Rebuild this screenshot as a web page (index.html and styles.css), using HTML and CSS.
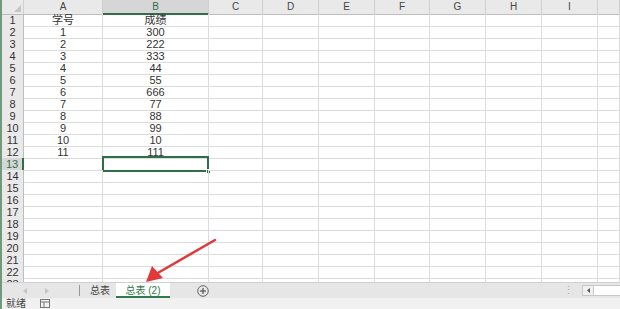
FILE: index.html
```html
<!DOCTYPE html>
<html lang="zh-CN">
<head>
	<meta charset="UTF-8">
	<title>总表 (2)</title>
	<link rel="stylesheet" href="styles.css">
</head>
<body>
	<div id="app">
		<div id="sheet">
			<div class="row head">
				<div class="corner"><span class="tri"></span></div>
				<div class="colhead">A</div>
				<div class="colhead sel">B</div>
				<div class="colhead">C</div>
				<div class="colhead">D</div>
				<div class="colhead">E</div>
				<div class="colhead">F</div>
				<div class="colhead">G</div>
				<div class="colhead">H</div>
				<div class="colhead">I</div>
				<div class="colhead"></div>
			</div>
			<div id="rows"></div>
		</div>
		<div id="tabbar">
			<div id="nav">
				<svg width="4" height="6" viewBox="0 0 4 6"><polygon points="4,0 0,3 4,6" fill="#c4c4c4"/></svg>
				<svg width="4" height="6" viewBox="0 0 4 6"><polygon points="0,0 4,3 0,6" fill="#c4c4c4"/></svg>
			</div>
			<div class="tab">总表</div>
			<div class="tab active">总表 (2)</div>
			<div id="addsheet">
				<svg width="12" height="12" viewBox="0 0 12 12">
					<circle cx="6" cy="6" r="5.3" fill="none" stroke="#666" stroke-width="1"/>
					<line x1="3" y1="6" x2="9" y2="6" stroke="#555" stroke-width="1.2"/>
					<line x1="6" y1="3" x2="6" y2="9" stroke="#555" stroke-width="1.2"/>
				</svg>
			</div>
			<div id="spacer"></div>
			<div id="dots">&#8942;</div>
			<div id="hscroll">
				<div id="hleft"><svg width="3" height="5" viewBox="0 0 3 5"><polygon points="3,0 0,2.5 3,5" fill="#555"/></svg></div>
			</div>
		</div>
		<div id="status">
			<span>就绪</span>
			<svg id="macro" width="10" height="9" viewBox="0 0 10 9">
				<rect x="0.5" y="0.5" width="9" height="8" fill="none" stroke="#777"/>
				<line x1="0.5" y1="3" x2="9.5" y2="3" stroke="#777"/>
				<line x1="4" y1="3" x2="4" y2="8.5" stroke="#777"/>
			</svg>
		</div>
		<svg id="arrow" width="620" height="309" viewBox="0 0 620 309">
			<line x1="215" y1="240" x2="156" y2="274" stroke="#e2383a" stroke-width="2.5" stroke-linecap="round"/>
			<polygon points="146,282 152,266 163,278" fill="#e2383a"/>
		</svg>
	</div>
	<script>
		var colA = ["学号","1","2","3","4","5","6","7","8","9","10","11"];
		var colB = ["成绩","300","222","333","44","55","666","77","88","99","10","111"];
		var rows = document.getElementById('rows');
		for(var i = 1; i <= 23; i++){
			var row = document.createElement('div');
			row.className = "row";
			var html = "<div class='rowhead" + (i == 13 ? " sel" : "") + "'>" + i + "</div>";
			html += "<div class='cell'>" + (colA[i-1] || "") + "</div>";
			html += "<div class='cell'>" + (colB[i-1] || "") + (i == 13 ? "<span class='selbox'><span class='handle'></span></span>" : "") + "</div>";
			for(var c = 0; c < 8; c++){
				html += "<div class='cell'></div>";
			}
			row.innerHTML = html;
			rows.appendChild(row);
		}
	</script>
</body>
</html>
```

FILE: styles.css
```css
*{
	margin: 0;
	padding: 0;
	box-sizing: border-box;
}
body{
	font-family: "Liberation Sans", "Noto Sans CJK SC", sans-serif;
	background-color: #fff;
	overflow: hidden;
}
#app{
	position: relative;
	width: 620px;
	height: 309px;
	border-left: 2px solid #6f9a7d;
	overflow: hidden;
}
#sheet{
	height: 282px;
	overflow: hidden;
}
.row{
	display: grid;
	grid-template-columns: 22px 79px 106px 54px 56px 56px 55px 56px 56px 56px 22px;
	height: 12px;
}
.row.head{
	height: 14px;
}
.corner, .colhead{
	position: relative;
	background-color: #e9e9e9;
	border-right: 1px solid #cfcfcf;
	border-bottom: 1px solid #bdbdbd;
	font-size: 10px;
	line-height: 13px;
	text-align: center;
	color: #444;
}
.colhead.sel{
	background-color: #d6d6d6;
	border-bottom: 2px solid #2e6e48;
	color: #2e6e48;
}
.tri{
	position: absolute;
	right: 2px;
	bottom: 2px;
	width: 0;
	height: 0;
	border-left: 7px solid transparent;
	border-bottom: 7px solid #c4c4c4;
}
.rowhead{
	background-color: #e9e9e9;
	border-right: 1px solid #bdbdbd;
	border-bottom: 1px solid #d2d2d2;
	font-size: 11px;
	line-height: 12px;
	text-align: center;
	color: #333;
}
.rowhead.sel{
	background-color: #d6d6d6;
	border-right: 2px solid #2e6e48;
	color: #2e6e48;
}
.cell{
	position: relative;
	border-right: 1px solid #dcdcdc;
	border-bottom: 1px solid #dcdcdc;
	font-size: 11px;
	line-height: 12px;
	text-align: center;
	color: #333;
}
.selbox{
	position: absolute;
	left: -1px;
	top: -2px;
	right: -1px;
	bottom: -2px;
	border: 2px solid #2e6e48;
}
.handle{
	position: absolute;
	right: -4px;
	bottom: -4px;
	width: 5px;
	height: 5px;
	background-color: #2e6e48;
	border: 1px solid #fff;
}
#tabbar{
	display: flex;
	align-items: stretch;
	height: 16px;
	background-color: #e6e6e6;
	border-top: 1px solid #d0d0d0;
	font-size: 10px;
	color: #444;
}
#nav{
	display: flex;
	align-items: center;
	width: 78px;
	padding-left: 21px;
	gap: 18px;
	border-right: 1px solid #999;
	margin: 2px 0;
}
.tab{
	padding: 0 6px;
	line-height: 15px;
	margin-left: 4px;
}
.tab.active{
	margin-left: 0;
	background-color: #fff;
	color: #2e7a4a;
	border-bottom: 2px solid #2e7a4a;
	padding: 0;
	width: 54px;
	text-align: center;
}
#addsheet{
	display: flex;
	align-items: center;
	margin-left: 27px;
}
#spacer{
	flex: 1;
}
#dots{
	color: #aaa;
	font-size: 11px;
	line-height: 15px;
	margin-right: 8px;
}
#hscroll{
	width: 38px;
	margin: 2px 0;
	background-color: #fff;
	border: 1px solid #c8c8c8;
	border-right: none;
}
#hleft{
	display: flex;
	align-items: center;
	justify-content: center;
	width: 11px;
	height: 100%;
	border-right: 1px solid #c8c8c8;
	background-color: #f0f0f0;
}
#status{
	display: flex;
	align-items: center;
	gap: 14px;
	height: 11px;
	padding-left: 4px;
	background-color: #f1f1f1;
	font-size: 10px;
	line-height: 11px;
	color: #444;
}
#arrow{
	position: absolute;
	left: -2px;
	top: 0;
	pointer-events: none;
}
```
